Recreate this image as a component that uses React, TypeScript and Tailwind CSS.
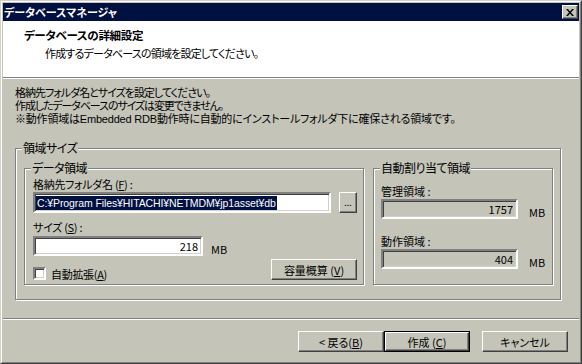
import React from "react";

const raised =
  "border border-t-white border-l-white border-b-[#404040] border-r-[#404040] shadow-[inset_-1px_-1px_0_#808080] bg-[#c4c4b9]";
const sunken =
  "border-2 border-t-[#808080] border-l-[#808080] border-b-white border-r-white shadow-[inset_1px_1px_0_#404040,inset_-1px_-1px_0_#d4d0c8]";

function GroupBox({ label, className, children }: any) {
  return (
    <div
      className={
        "relative border border-[#808080] shadow-[1px_1px_0_#fff,inset_1px_1px_0_#fff] " +
        className
      }
    >
      <span className="absolute -top-[8px] left-[6px] bg-[#c4c4b9] px-[1px] leading-[14px] text-[12px] tracking-[-0.5px]">
        {label}
      </span>
      {children}
    </div>
  );
}

function Btn({ children, def, className }: any) {
  if (def) {
    return (
      <div className={"border border-black " + className}>
        <div className={raised + " h-full flex items-center justify-center"}>{children}</div>
      </div>
    );
  }
  return <div className={raised + " flex items-center justify-center " + className}>{children}</div>;
}

export default function App() {
  return (
    <div className="w-[582px] h-[364px] overflow-hidden bg-[#c4c4b9] text-[11px] leading-[12px] text-black font-['Noto_Sans_CJK_JP',sans-serif] [font-feature-settings:'palt']">
      <div className="w-full h-full border border-t-[#d4d0c8] border-l-[#d4d0c8] border-b-[#404040] border-r-[#404040]">
        <div className="w-full h-full border border-t-white border-l-white border-b-[#808080] border-r-[#808080] p-[1px] flex flex-col">
          {/* タイトルバー */}
          <div className="h-[18px] bg-[#001040] flex items-center justify-between pl-[1px] pr-[1px]">
            <span className="text-white font-bold text-[11px]">データベースマネージャ</span>
            <div className={raised + " w-[16px] h-[14px] flex items-center justify-center"}>
              <svg width="8" height="7" viewBox="0 0 8 7">
                <path d="M0 0h2l2 2.5L6 0h2L5 3.5 8 7H6L4 4.5 2 7H0l3-3.5z" fill="#000" />
              </svg>
            </div>
          </div>

          {/* ヘッダー */}
          <div className="h-[56px] bg-white pl-[21px] pt-[7px]">
            <div className="font-bold text-[11.5px] leading-[14px] tracking-[-0.3px]">データベースの詳細設定</div>
            <div className="pl-[21px] mt-[4px] leading-[14px] tracking-[-0.8px]">
              作成するデータベースの領域を設定してください。
            </div>
          </div>
          <div className="h-[1px] bg-[#808080]" />
          <div className="h-[1px] bg-white" />

          {/* 本文 */}
          <div className="pl-[12px] pt-[7px] leading-[13px]">
            <div className="tracking-[-1px]">格納先フォルダ名とサイズを設定してください。</div>
            <div className="tracking-[-1.1px]">作成したデータベースのサイズは変更できません。</div>
            <div className="tracking-[-0.2px]">
              ※動作領域は<span className="font-['Liberation_Sans',sans-serif]">Embedded RDB</span>
              動作時に自動的にインストールフォルダ下に確保される領域です。
            </div>
          </div>

          <GroupBox label="領域サイズ" className="ml-[12px] mt-[22px] w-[546px] h-[152px] pl-[8px] pt-[19px] flex gap-[9px]">
            {/* データ領域 */}
            <GroupBox label="データ領域" className="w-[340px] h-[117px] pl-[8px] pr-[6px] pt-[8px]">
              <div className="leading-[14px] tracking-[-0.3px]">格納先フォルダ名 (<span className="underline">F</span>) :</div>
              <div className="flex gap-[8px] mt-[1px]">
                <div className={sunken + " w-[299px] h-[21px] bg-white flex items-center pl-[1px]"}>
                  <span className="bg-[#001040] text-white leading-[14px] px-[1px] tracking-[-0.1px] font-['Liberation_Sans',sans-serif] text-[10.5px]">
                    C:¥Program Files¥HITACHI¥NETMDM¥jp1asset¥db
                  </span>
                </div>
                <Btn className="w-[18px] h-[21px] text-[9px]">...</Btn>
              </div>
              <div className="leading-[14px] mt-[7px] tracking-[-0.3px]">サイズ (<span className="underline">S</span>) :</div>
              <div className="flex items-end gap-[8px] mt-[2px]">
                <div className={sunken + " w-[170px] h-[20px] bg-white flex items-center justify-end pr-[3px]"}>218</div>
                <span className="mb-[1px]">MB</span>
              </div>
              <div className="flex justify-between mt-[3px]">
                <div className="flex items-center gap-[5px] mt-[8px] h-[13px]">
                  <div className={sunken + " w-[13px] h-[13px] bg-white"} />
                  <span className="tracking-[-0.3px]">自動拡張(<span className="underline">A</span>)</span>
                </div>
                <Btn className="w-[86px] h-[21px]">
                  容量概算 (<span className="underline">V</span>)
                </Btn>
              </div>
            </GroupBox>

            {/* 自動割り当て領域 */}
            <GroupBox label="自動割り当て領域" className="w-[180px] h-[117px] pl-[7px] pt-[15px]">
              <div className="leading-[14px]">管理領域 :</div>
              <div className="flex items-end gap-[11px] mt-[1px]">
                <div className={sunken + " w-[137px] h-[20px] flex items-center justify-end pr-[3px]"}>1757</div>
                <span className="mb-[1px]">MB</span>
              </div>
              <div className="leading-[14px] mt-[15px]">動作領域 :</div>
              <div className="flex items-end gap-[11px] mt-[1px]">
                <div className={sunken + " w-[137px] h-[20px] flex items-center justify-end pr-[3px]"}>404</div>
                <span className="mb-[1px]">MB</span>
              </div>
            </GroupBox>
          </GroupBox>

          <div className="mt-[18px] h-[1px] bg-[#808080]" />
          <div className="h-[1px] bg-white" />

          {/* ボタン */}
          <div className="flex justify-end pr-[11px] mt-[11px]">
            <Btn className="w-[86px] h-[21px]">
              &lt;&nbsp;戻る(<span className="underline">B</span>)
            </Btn>
            <Btn def className="w-[86px] h-[21px]">
              作成 (<span className="underline">C</span>)
            </Btn>
            <Btn className="w-[86px] h-[21px] ml-[12px]">キャンセル</Btn>
          </div>
        </div>
      </div>
    </div>
  );
}
